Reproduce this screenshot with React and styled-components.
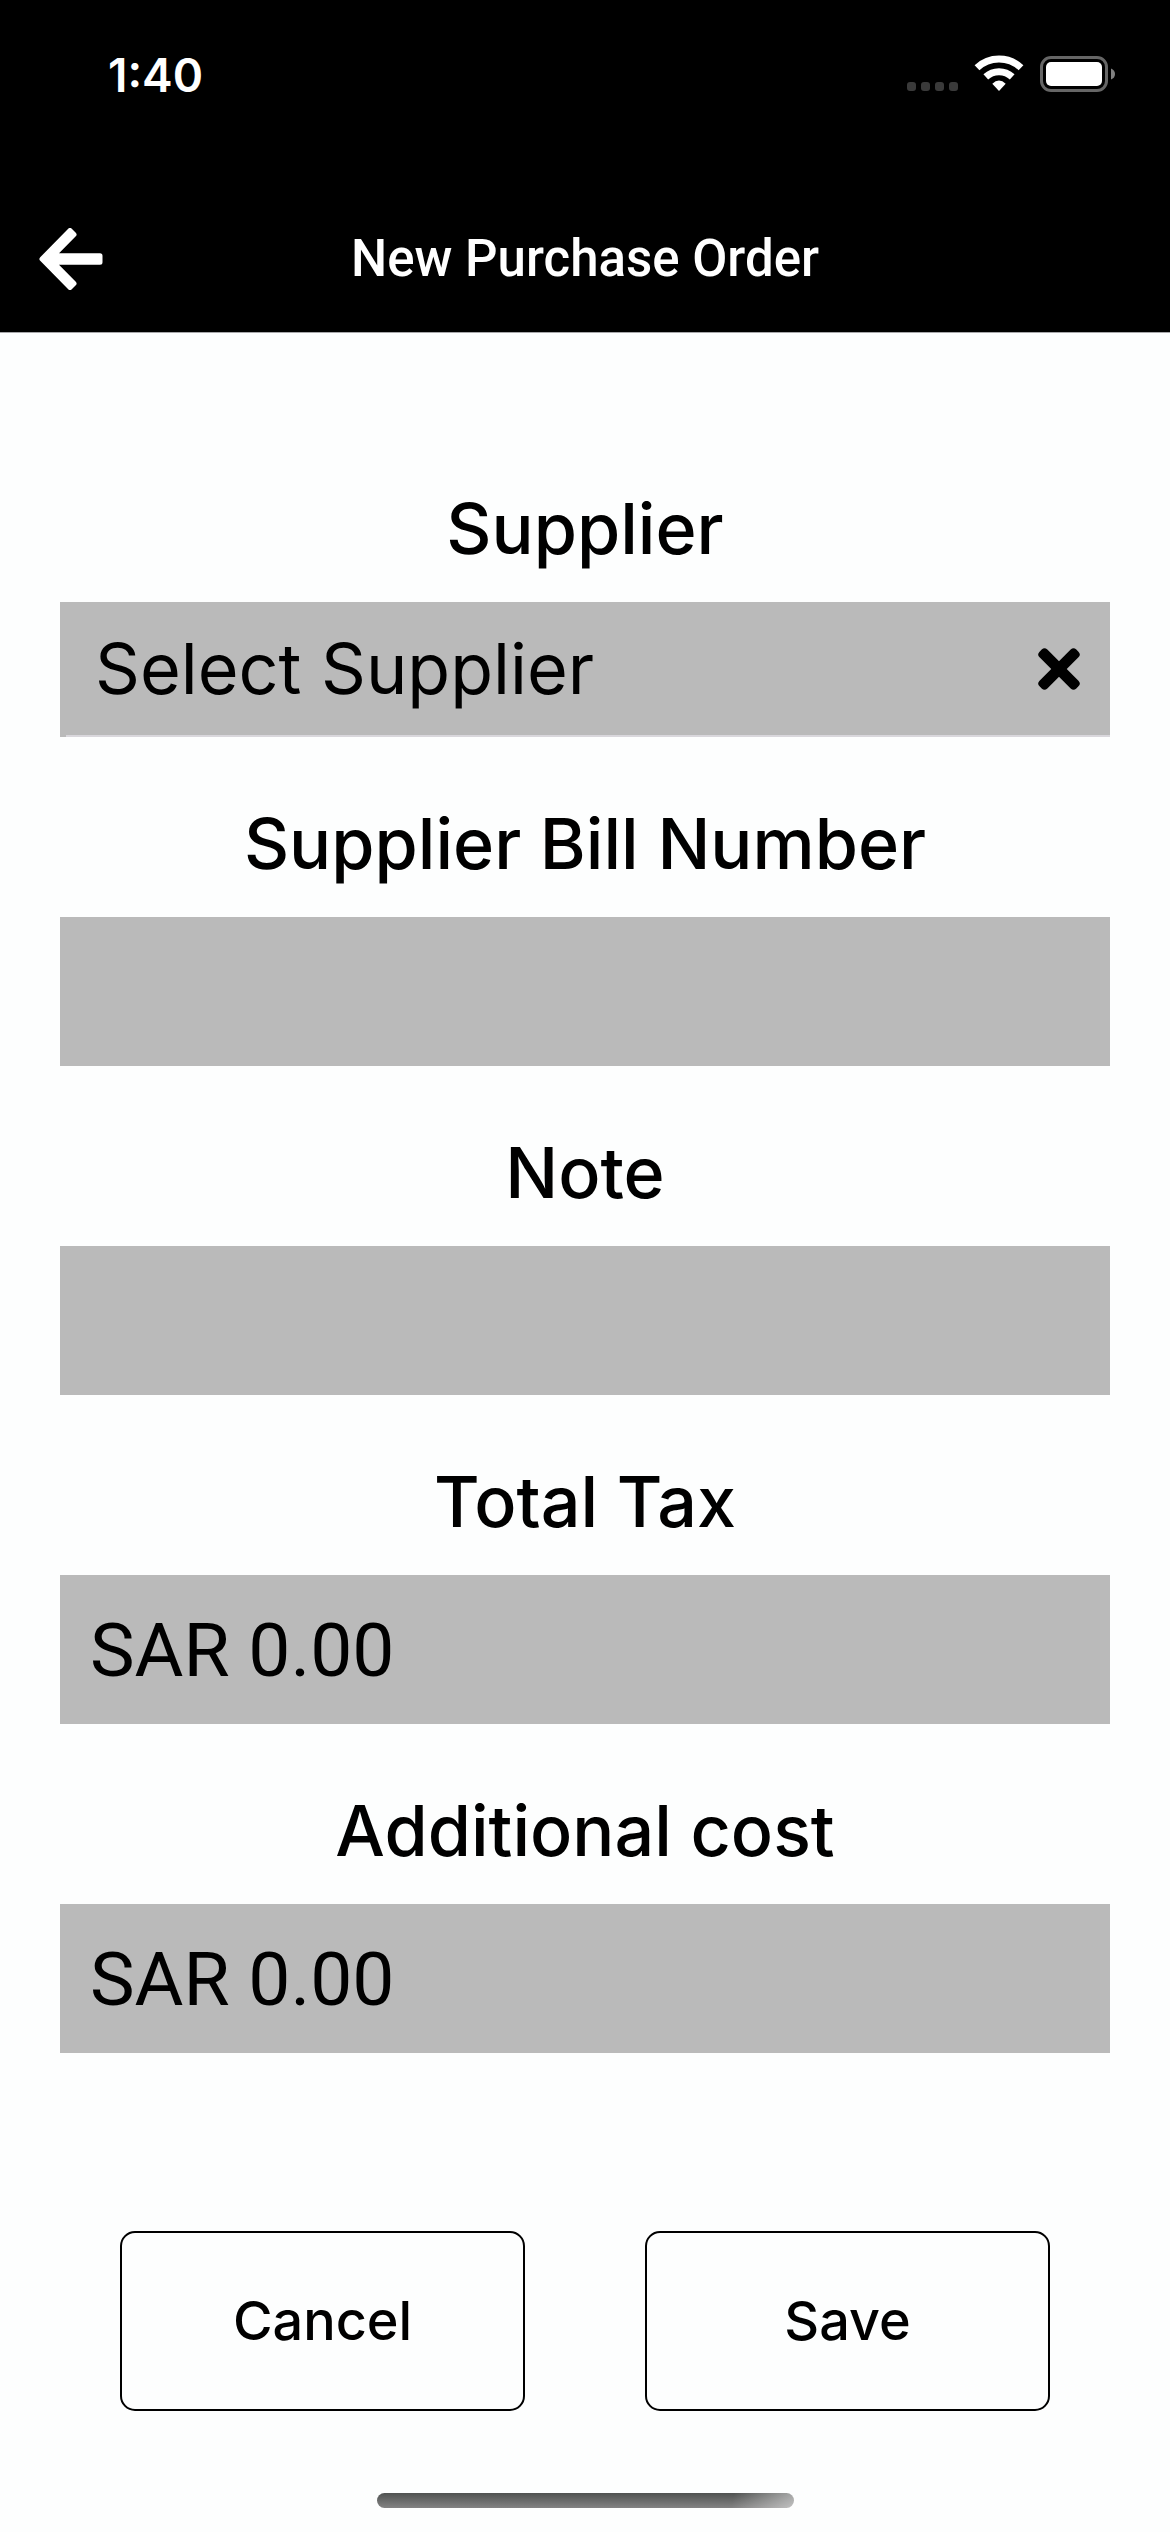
import React, { useState } from "react"
import styled, { createGlobalStyle } from "styled-components"

export default function App() {
    const [supplier, setSupplier] = useState("")
    const [values, setValues] = useState({
        bill: "",
        note: "",
        tax: "SAR 0.00",
        cost: "SAR 0.00"
    })

    function handleChange(e) {
        setValues({ ...values, [e.target.id]: e.target.value })
    }

    return (
        <Page>
            <GlobalStyle />
            <Top>
                <StatusBar>
                    <Time>1:40</Time>
                    <StatusIcons />
                </StatusBar>
                <Header>
                    <BackButton type="button" aria-label="Back">
                        <ArrowIcon />
                    </BackButton>
                    <Title>New Purchase Order</Title>
                </Header>
            </Top>

            <Form onSubmit={(e) => e.preventDefault()}>
                <Label htmlFor="supplier">Supplier</Label>
                <SelectRow>
                    <Select id="supplier" value={supplier} onChange={(e) => setSupplier(e.target.value)}>
                        <option value="">Select Supplier</option>
                    </Select>
                    <ClearButton type="button" aria-label="Clear supplier" onClick={() => setSupplier("")}>
                        <CrossIcon />
                    </ClearButton>
                </SelectRow>

                {fields.map((field) => (
                    <React.Fragment key={field.id}>
                        <Label htmlFor={field.id}>{field.label}</Label>
                        <Input id={field.id} type="text" value={values[field.id]} onChange={handleChange} />
                    </React.Fragment>
                ))}

                <Actions>
                    <Button type="button">Cancel</Button>
                    <Button type="submit">Save</Button>
                </Actions>
            </Form>

            <HomeIndicator />
        </Page>
    )
}

const fields = [
    { id: "bill", label: "Supplier Bill Number" },
    { id: "note", label: "Note" },
    { id: "tax", label: "Total Tax" },
    { id: "cost", label: "Additional cost" }
]

function StatusIcons() {
    return (
        <svg width="210" height="40" viewBox="0 0 210 40" aria-hidden="true">
            <g fill="#3a3a3a">
                <rect x="0" y="27" width="9" height="9" rx="3" />
                <rect x="14" y="27" width="9" height="9" rx="3" />
                <rect x="28" y="27" width="9" height="9" rx="3" />
                <rect x="42" y="27" width="9" height="9" rx="3" />
            </g>
            <g fill="none" stroke="#fff" strokeWidth="7">
                <path d="M70 12.7A32 32 0 0 1 114 12.7" />
                <path d="M78.8 21.8A19.5 19.5 0 0 1 105.2 21.8" />
            </g>
            <path d="M85.3 28.7Q92 22.3 98.7 28.7L92 36Z" fill="#fff" />
            <rect x="134.5" y="2.5" width="65" height="33" rx="9.5" fill="none" stroke="#666" strokeWidth="3" />
            <rect x="139" y="7" width="56" height="24" rx="5" fill="#fff" />
            <path d="M204 13.5Q208 15 208 19T204 24.5Z" fill="#808080" />
        </svg>
    )
}

function ArrowIcon() {
    return (
        <svg width="64" height="62" viewBox="0 0 64 62" aria-hidden="true">
            <path
                d="M31 2.5L3 31L31 59.5L35 55.5L14 34.2H61V27.8H14L35 6.5Z"
                fill="#fff"
                stroke="#fff"
                strokeWidth="5"
                strokeLinejoin="round"
            />
        </svg>
    )
}

function CrossIcon() {
    return (
        <svg width="42" height="42" viewBox="0 0 42 42" aria-hidden="true">
            <g transform="rotate(45 21 21)">
                <rect x="-5" y="15.5" width="52" height="11" rx="4" />
                <rect x="15.5" y="-5" width="11" height="52" rx="4" />
            </g>
        </svg>
    )
}

const GlobalStyle = createGlobalStyle`
    * {
        box-sizing: border-box;
    }

    body {
        margin: 0;
        background: #fdfefe;
        color: #000;
        font-family: Inter, sans-serif;
    }
`

const Page = styled.div`
    display: flex;
    flex-direction: column;
    min-height: 100vh;
`

const Top = styled.header`
    background: #000;
    color: #fff;
    border-bottom: 1px solid #a7a7aa;
`

const StatusBar = styled.div`
    display: flex;
    align-items: center;
    justify-content: space-between;
    height: 150px;
    padding: 0 53px 0 108px;
`

const Time = styled.span`
    font-size: 46px;
    font-weight: 600;
`

const Header = styled.div`
    display: grid;
    grid-template-columns: 103px 1fr 103px;
    align-items: center;
    padding: 78px 0 42px;
`

const BackButton = styled.button`
    display: flex;
    justify-content: flex-end;
    padding: 0;
    border: 0;
    background: none;
    cursor: pointer;
`

const Title = styled.h1`
    margin: 0;
    font: 500 51px/60px Roboto, sans-serif;
    text-align: center;
`

const Form = styled.form`
    display: flex;
    flex-direction: column;
    padding: 89px 60px 0;
`

const Label = styled.label`
    height: 180px;
    padding-top: 63px;
    font-size: 70px;
    font-weight: 500;
    line-height: 88px;
    text-align: center;
`

const SelectRow = styled.div`
    display: flex;
    align-items: center;
    height: 135px;
    padding: 0 30px 2px 0;
    background: linear-gradient(#d9d7dc, #d9d7dc) 6px 100% / 100% 2px no-repeat #bababa;
`

const Select = styled.select`
    flex: 1;
    min-width: 0;
    height: 100%;
    padding: 0 35px;
    border: 0;
    appearance: none;
    background: none;
    color: #000;
    font: 400 70px/88px Inter, sans-serif;
`

const ClearButton = styled.button`
    display: flex;
    padding: 0;
    border: 0;
    background: none;
    cursor: pointer;
`

const Input = styled.input`
    width: 100%;
    height: 149px;
    padding: 0 30px;
    border: 0;
    border-radius: 0;
    background: #bababa;
    color: #000;
    font: 400 75px/88px Roboto, sans-serif;
`

const Actions = styled.div`
    display: grid;
    grid-template-columns: 1fr 1fr;
    gap: 120px;
    padding: 178px 60px 0;
`

const Button = styled.button`
    height: 180px;
    border: 2px solid #000;
    border-radius: 15px;
    background: none;
    color: #000;
    font: 500 54px/68px Inter, sans-serif;
    cursor: pointer;
`

const HomeIndicator = styled.div`
    width: 36%;
    max-width: 417px;
    height: 15px;
    margin: auto auto 24px;
    border-radius: 8px;
    background: linear-gradient(100deg, transparent 85%, rgba(255, 255, 255, 0.5)), linear-gradient(#505251, #838383);
`
